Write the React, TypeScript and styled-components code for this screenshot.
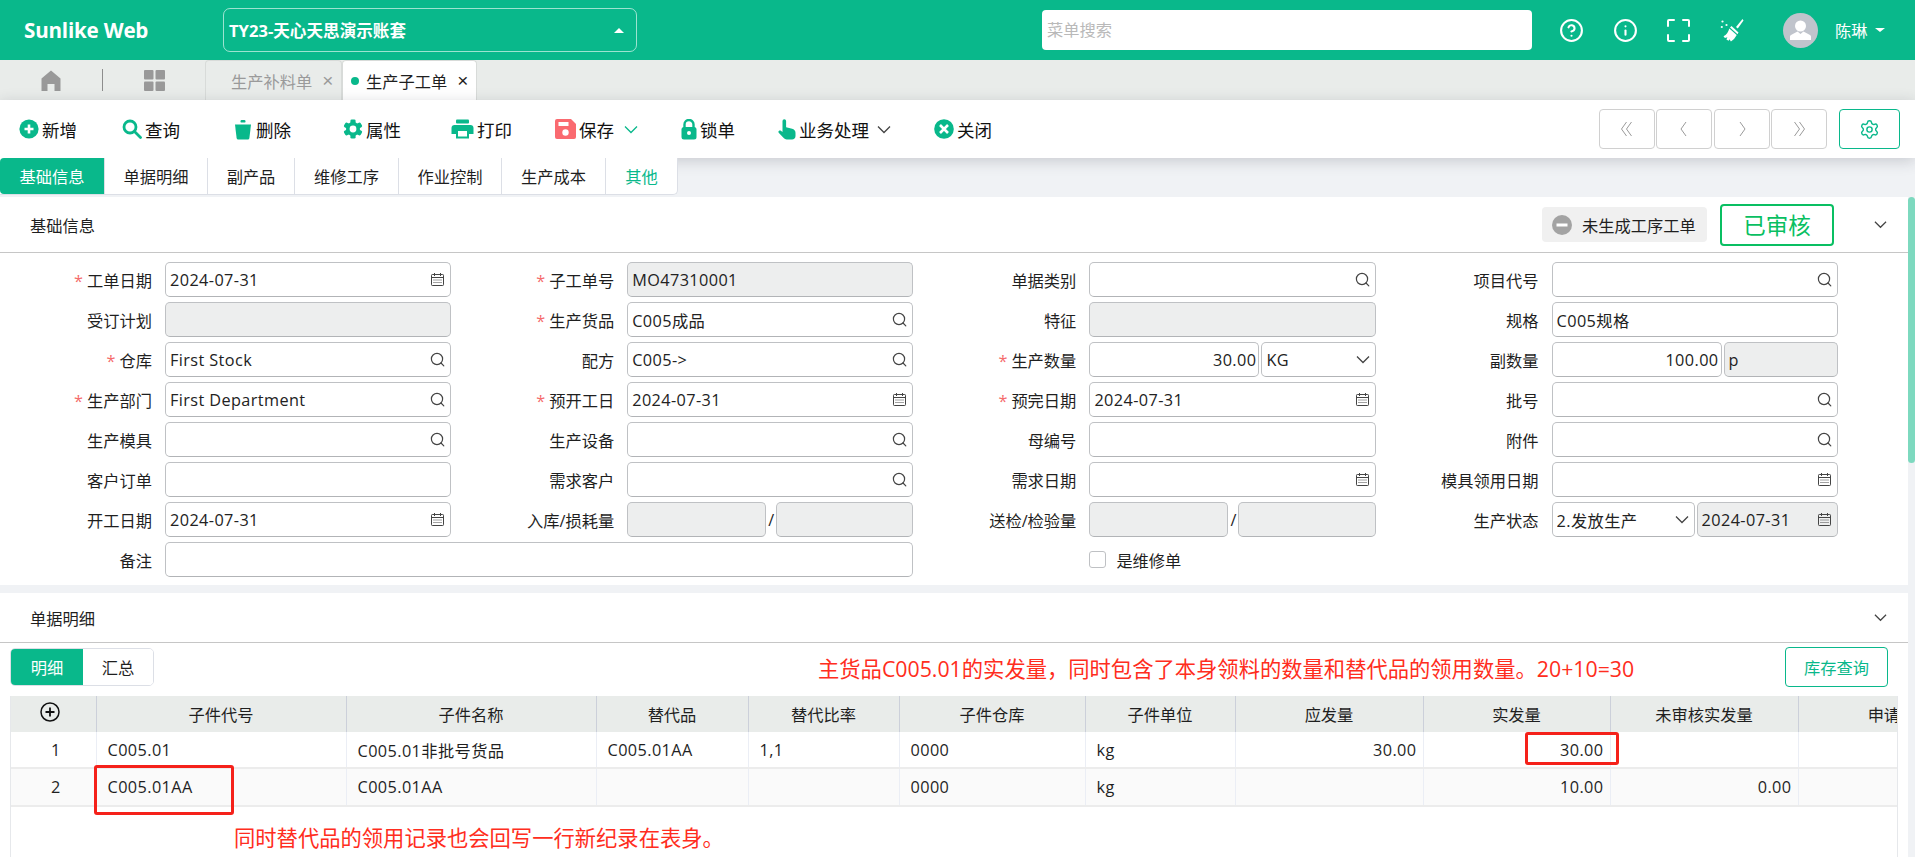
import { FC, Fragment, ReactNode } from 'react';
import styled, { createGlobalStyle } from 'styled-components';
import { Settings, CircleHelp, Info } from 'lucide-react';

const teal = '#09b88b';
const fontStack = `'Open Sans', 'Noto Sans CJK SC', sans-serif`;

const GlobalStyle = createGlobalStyle`
  html, body {
    margin: 0;
    padding: 0;
    background: #f0f2f5;
  }
  body {
    font-family: ${fontStack};
    font-size: 16.25px;
    color: #1f1f1f;
  }
  * {
    box-sizing: border-box;
  }
`;

const Page = styled.div`
  display: flex;
  flex-direction: column;
  width: 1915px;
  height: 857px;
  overflow: hidden;
`;

/* top bar */
const Header = styled.header`
  display: flex;
  align-items: center;
  flex-shrink: 0;
  height: 60px;
  background: ${teal};
  color: #fff;
`;

const Logo = styled.div`
  width: 223px;
  padding-left: 24px;
  font-size: 20.6px;
  font-weight: 700;
  letter-spacing: -0.2px;
  white-space: nowrap;
`;

const AccountSelect = styled.div`
  display: flex;
  align-items: center;
  justify-content: space-between;
  width: 414px;
  height: 44px;
  padding: 0 12px 0 5px;
  border: 1px solid rgba(255, 255, 255, 0.6);
  border-radius: 7px;
  font-size: 16.6px;
  font-weight: 700;
`;

const Caret = styled.i<{ $size?: number }>`
  display: inline-block;
  width: 0;
  height: 0;
  border-left: ${({ $size }) => $size ?? 5}px solid transparent;
  border-right: ${({ $size }) => $size ?? 5}px solid transparent;
  border-bottom: ${({ $size }) => $size ?? 5}px solid #fff;
`;

const CaretDown = styled(Caret)`
  border-bottom: none;
  border-top: ${({ $size }) => $size ?? 4}px solid #fff;
  margin-left: 7px;
`;

const MenuSearch = styled.input`
  width: 490px;
  height: 40px;
  margin-left: 405px;
  padding: 0 5px;
  border: none;
  border-radius: 4px;
  outline: none;
  background: #fff;
  font-family: inherit;
  font-size: 16.25px;

  &::placeholder {
    color: #b9b9b9;
  }
`;

const HeaderIcons = styled.div`
  display: flex;
  margin-left: 13px;
`;

const HeaderIcon = styled.span`
  display: flex;
  align-items: center;
  justify-content: center;
  width: 53.5px;
`;

const Avatar = styled.span`
  display: flex;
  width: 35px;
  height: 35px;
  margin-left: 24px;
  border-radius: 50%;
  overflow: hidden;
  background: #c0c4cc;
`;

const UserName = styled.span`
  display: flex;
  align-items: center;
  margin-left: 17px;
  color: #fff;
`;

/* page tabs */
const PageTabs = styled.nav`
  display: flex;
  align-items: stretch;
  flex-shrink: 0;
  height: 40px;
  background: #e9ecea;
`;

const TabIcon = styled.span<{ $width: number; $divider?: boolean }>`
  display: flex;
  align-items: center;
  justify-content: center;
  width: ${({ $width }) => $width}px;
  border-image: ${({ $divider }) => ($divider ? 'linear-gradient(transparent 25%, #8d8d8d 25%, #8d8d8d 75%, transparent 75%) 1' : 'none')};
  border-right: ${({ $divider }) => ($divider ? '1px solid' : 'none')};
`;

const PageTab = styled.div<{ $active?: boolean }>`
  display: flex;
  align-items: center;
  width: ${({ $active }) => ($active ? 135 : 137)}px;
  padding-left: ${({ $active }) => ($active ? 8 : 25)}px;
  border: 1px solid #d8dbd9;
  border-bottom: none;
  border-radius: 4px 4px 0 0;
  background: ${({ $active }) => ($active ? '#fff' : 'transparent')};
  color: ${({ $active }) => ($active ? '#1f1f1f' : '#9a9a9a')};
  white-space: nowrap;
`;

const TabDot = styled.i`
  width: 8px;
  height: 8px;
  margin-right: 7px;
  border-radius: 50%;
  background: ${teal};
`;

const TabClose = styled.span`
  margin-left: 10px;
  font-size: 19px;
  font-weight: 300;
  font-family: 'Liberation Sans', sans-serif;
`;

/* action toolbar */
const Toolbar = styled.div`
  position: relative;
  z-index: 1;
  display: flex;
  align-items: center;
  flex-shrink: 0;
  height: 58px;
  padding: 0 15px 0 19px;
  background: #fff;
  box-shadow: 0 3px 14px rgba(40, 44, 60, 0.2);
`;

const ActionItem = styled.button<{ $width?: number }>`
  display: flex;
  align-items: center;
  flex-shrink: 0;
  width: ${({ $width }) => ($width ? `${$width}px` : 'auto')};
  height: 40px;
  padding: 0;
  border: none;
  background: none;
  font-family: inherit;
  font-size: 17.5px;
  color: #111;
  white-space: nowrap;

  svg:first-child {
    margin-right: 3px;
  }
`;

const ActionChevron = styled.span<{ $gap: number }>`
  display: flex;
  margin-left: ${({ $gap }) => $gap}px;
`;

const Pager = styled.div`
  display: flex;
  gap: 1.5px;
  margin-left: auto;
`;

const PagerButton = styled.span`
  display: flex;
  align-items: center;
  justify-content: center;
  width: 56px;
  height: 40px;
  border: 1px solid #d0d0d0;
  border-radius: 4px;
`;

const GearButton = styled.span`
  display: flex;
  align-items: center;
  justify-content: center;
  width: 61px;
  height: 40px;
  margin-left: 12px;
  border: 1px solid ${teal};
  border-radius: 4px;
  color: ${teal};
`;

/* body */
const Body = styled.div`
  display: flex;
  flex: 1;
  min-height: 0;
`;

const Main = styled.main`
  display: flex;
  flex-direction: column;
  flex: 1;
  min-width: 0;
`;

const ScrollTrack = styled.div`
  flex-shrink: 0;
  width: 7px;
  padding-top: 39px;
`;

const ScrollThumb = styled.div`
  height: 266px;
  border-radius: 4px;
  background: #7dd9bf;
`;

const SectionTabs = styled.div`
  position: relative;
  z-index: 2;
  display: flex;
  flex-shrink: 0;
  align-self: flex-start;
  height: 37px;
  margin-bottom: 2px;
  background: #fff;
  border: 1px solid #dcdfe6;
  border-left: none;
  border-top: none;
  border-radius: 0 0 5px 0;
`;

const SectionTab = styled.div<{ $width: number; $active?: boolean; $accent?: boolean }>`
  display: flex;
  align-items: center;
  justify-content: center;
  width: ${({ $width }) => $width}px;
  border-right: 1px solid #dcdfe6;
  background: ${({ $active }) => ($active ? teal : 'transparent')};
  color: ${({ $active, $accent }) => ($active ? '#fff' : $accent ? teal : '#1f1f1f')};
  border-radius: ${({ $active }) => ($active ? '4px 0 0 4px' : '0')};

  &:last-child {
    border-right: none;
  }
`;

const Card = styled.section<{ $grow?: boolean }>`
  display: flex;
  flex-direction: column;
  flex: ${({ $grow }) => ($grow ? '1' : '0 0 auto')};
  min-height: 0;
  margin-bottom: ${({ $grow }) => ($grow ? '0' : '8px')};
  background: #fff;
`;

const CardHeader = styled.div<{ $height: number }>`
  display: flex;
  align-items: center;
  flex-shrink: 0;
  height: ${({ $height }) => $height}px;
  padding: 0 21px 0 30px;
  border-bottom: 1px solid #c6c6c6;
`;

const CardTitle = styled.div`
  margin-right: auto;
`;

const GenerateStatus = styled.div`
  display: flex;
  align-items: center;
  width: 165px;
  height: 35px;
  padding-left: 10px;
  border-radius: 4px;
  background: #f0f0f0;
  white-space: nowrap;

  svg {
    margin-right: 10px;
  }
`;

const AuditStamp = styled.div`
  display: flex;
  align-items: center;
  justify-content: center;
  width: 114px;
  height: 42px;
  margin-left: 13px;
  margin-right: 40px;
  border: 2px solid #09bf62;
  border-radius: 4px;
  color: #09bf62;
  font-size: 22.5px;
`;

/* form */
const FormGrid = styled.div`
  display: grid;
  grid-template-columns: repeat(4, 462.2px);
  grid-auto-rows: 35px;
  row-gap: 5px;
  padding: 9px 0 8px;
`;

const Field = styled.div<{ $span?: number }>`
  display: grid;
  grid-template-columns: 152px 1fr;
  column-gap: 13px;
  align-items: center;
  padding-right: 11px;
  min-width: 0;
  ${({ $span }) => $span && `grid-column: span ${$span};`}
`;

const Label = styled.label`
  text-align: right;
  white-space: nowrap;
`;

const Star = styled.span`
  margin-right: 4px;
  color: #f56c6c;
`;

const Controls = styled.div`
  display: flex;
  align-items: center;
  gap: 2px;
  min-width: 0;
  width: 100%;
`;

const Control = styled.div<{ $disabled?: boolean; $basis?: number }>`
  display: flex;
  align-items: center;
  flex: ${({ $basis }) => ($basis ? `0 0 ${$basis}px` : '1 1 0')};
  min-width: 0;
  height: 35px;
  padding-right: 5px;
  border: 1px solid #bfc1c4;
  border-bottom-color: #b2b4b7;
  border-radius: 5px;
  background: ${({ $disabled }) => ($disabled ? '#edeeee' : '#fff')};
`;

const ControlInput = styled.input<{ $right?: boolean }>`
  flex: 1;
  min-width: 0;
  width: 100%;
  height: 100%;
  padding: 0 ${({ $right }) => ($right ? '0' : '0')} 0 4px;
  margin-right: ${({ $right }) => ($right ? '-3px' : '0')};
  border: none;
  outline: none;
  background: transparent;
  font-family: inherit;
  font-size: 16.25px;
  color: #222;
  letter-spacing: 0.4px;
  text-align: ${({ $right }) => ($right ? 'right' : 'left')};
`;

const Slash = styled.span`
  flex-shrink: 0;
  width: 6px;
  text-align: center;
`;

const CheckField = styled.label`
  display: flex;
  align-items: center;
  padding-left: 165px;
`;

const CheckBox = styled.input`
  appearance: none;
  width: 17px;
  height: 17px;
  margin: 0 10px 0 0;
  border: 1px solid #bfc1c4;
  border-radius: 3px;
  background: #fff;
`;

/* detail section */
const DetailBar = styled.div`
  display: flex;
  align-items: center;
  flex-shrink: 0;
  height: 40px;
  margin: 4px 0 9px;
  padding: 0 20px 0 10px;
`;

const Switcher = styled.div`
  display: flex;
  height: 38px;
  border: 1px solid #dcdfe6;
  border-radius: 5px;
  overflow: hidden;
`;

const SwitchItem = styled.div<{ $active?: boolean; $width: number }>`
  display: flex;
  align-items: center;
  justify-content: center;
  width: ${({ $width }) => $width}px;
  background: ${({ $active }) => ($active ? teal : '#fff')};
  color: ${({ $active }) => ($active ? '#fff' : '#1f1f1f')};
`;

const RedNote = styled.div<{ $indent: number }>`
  margin-left: ${({ $indent }) => $indent}px;
  color: #ff2d20;
  font-size: 21.3px;
  white-space: nowrap;
`;

const StockButton = styled.div`
  display: flex;
  align-items: center;
  justify-content: center;
  width: 103px;
  height: 40px;
  margin-left: auto;
  border: 1px solid ${teal};
  border-radius: 4px;
  color: ${teal};
`;

const TableWrap = styled.div`
  position: relative;
  flex: 1;
  width: 1888px;
  min-height: 0;
  margin-left: 10px;
  border-left: 1px solid #e6e8eb;
  border-right: 1px solid #e6e8eb;
  overflow: hidden;
`;

const Table = styled.table`
  width: 1975px;
  border-collapse: collapse;
  table-layout: fixed;
`;

const Th = styled.th`
  height: 36px;
  padding: 0;
  border-right: 1px solid #ccd0da;
  background: #e9ecea;
  font-weight: 400;
  text-align: center;
  white-space: nowrap;
`;

const AddTh = styled(Th)`
  padding: 0 6px 5px 0;

  svg {
    display: block;
    margin: 0 auto;
  }
`;

const Tr = styled.tr<{ $alt?: boolean }>`
  height: ${({ $alt }) => ($alt ? 38 : 36)}px;
  background: ${({ $alt }) => ($alt ? '#fafafa' : '#fff')};
  border-bottom: 2px solid #ececec;
`;

const Td = styled.td<{ $align?: string }>`
  padding: 0 6px 0 11px;
  border-right: 1px solid #ebeef5;
  text-align: ${({ $align }) => $align ?? 'left'};
  letter-spacing: 0.4px;
  white-space: nowrap;
`;

const RedBox = styled.div<{ $left: number; $top: number; $width: number; $height: number }>`
  position: absolute;
  left: ${({ $left }) => $left}px;
  top: ${({ $top }) => $top}px;
  width: ${({ $width }) => $width}px;
  height: ${({ $height }) => $height}px;
  border: 3px solid #f5211a;
  border-radius: 3px;
`;

const FooterNote = styled(RedNote)`
  margin-top: 14px;
`;

/* drawings */
const SearchGlyph = () => (
  <svg width="15" height="15" viewBox="0 0 15 15" fill="none" stroke="#444" strokeWidth="1.2">
    <circle cx="7" cy="7" r="5.6" />
    <path d="M11 11l2.8 2.8" strokeLinecap="round" />
  </svg>
);

const CalendarGlyph = () => (
  <svg width="15" height="15" viewBox="0 0 15 15" fill="none" stroke="#444" strokeWidth="1">
    <rect x="1.5" y="2.5" width="12" height="11" rx="0.8" />
    <path d="M1.5 5.5h12M4.5 1v3M10.5 1v3" />
    <path d="M3.5 8h2M6.5 8h2M9.5 8h2M3.5 10.5h2M6.5 10.5h2M9.5 10.5h2" strokeDasharray="1 .5" />
  </svg>
);

const ChevronGlyph: FC<{ color?: string; width?: number }> = ({ color = '#444', width = 14 }) => (
  <svg width={width} height="9" viewBox="0 0 14 9" fill="none" stroke={color} strokeWidth="1.3">
    <path d="M1 1.5l6 6 6-6" />
  </svg>
);

const PlusCircleIcon = () => (
  <svg width="20" height="20" viewBox="0 0 20 20">
    <circle cx="10" cy="10" r="9.6" fill={teal} />
    <path d="M10 5.5v9M5.5 10h9" stroke="#fff" strokeWidth="2.6" />
  </svg>
);

const SearchIcon = () => (
  <svg width="20" height="20" viewBox="0 0 20 20" fill="none" stroke={teal} strokeWidth="2.8">
    <circle cx="8" cy="8" r="6" />
    <path d="M12.5 12.5l6 6" strokeLinecap="round" />
  </svg>
);

const TrashIcon = () => (
  <svg width="19" height="21" viewBox="0 0 19 21" fill={teal}>
    <path d="M1 5.5h16l-1.6 13.4c-.1.8-.7 1.6-1.7 1.6H4.3c-1 0-1.6-.8-1.7-1.6z" />
    <rect x="6.5" y="1" width="5" height="2.6" rx="1.2" />
  </svg>
);

const GearIcon = () => (
  <svg width="20" height="20" viewBox="0 0 20 20">
    {[0, 60, 120, 180, 240, 300].map((a) => (
      <rect key={a} x="7.4" y="0.4" width="5.2" height="5" rx="1.4" fill={teal} transform={`rotate(${a} 10 10)`} />
    ))}
    <circle cx="10" cy="10" r="7" fill={teal} />
    <circle cx="10" cy="10" r="3.4" fill="#fff" />
  </svg>
);

const PrinterIcon = () => (
  <svg width="23" height="20" viewBox="0 0 23 20">
    <rect x="5" y="0.5" width="13" height="4" rx="1" fill={teal} />
    <path d="M0.5 9c0-1.8 1.2-3 3-3h16c1.8 0 3 1.2 3 3v6h-4.5v4.5H5V15H.5z" fill={teal} />
    <rect x="7" y="12" width="9" height="5.5" fill="#fff" />
  </svg>
);

const SaveIcon = () => (
  <svg width="21" height="20" viewBox="0 0 21 20">
    <path d="M2 0h14l5 5v13a2 2 0 0 1-2 2H2a2 2 0 0 1-2-2V2a2 2 0 0 1 2-2z" fill="#fa6a70" />
    <rect x="3.5" y="3" width="10" height="4" fill="#fff" />
    <circle cx="10.5" cy="13.5" r="3.2" fill="#fff" />
  </svg>
);

const LockIcon = () => (
  <svg width="16" height="21" viewBox="0 0 16 21">
    <path d="M3.5 9V5.5a4.5 4.5 0 0 1 9 0V9" fill="none" stroke={teal} strokeWidth="2.4" />
    <rect x="0.5" y="8" width="15" height="12.5" rx="2.5" fill={teal} />
    <circle cx="8" cy="14" r="2" fill="#fff" />
  </svg>
);

const HandIcon = () => (
  <svg width="18" height="21" viewBox="0 0 18 21" fill={teal}>
    <path d="M4.5 2a1.8 1.8 0 0 1 3.6 0v6.3l6 1.5c2 .5 3.4 2 3.4 4v3.2c0 2-1.5 3.5-3.5 3.5H8.7c-1.2 0-2.2-.5-3-1.4L.7 13.7c-1-1.5.8-3 2.2-2l1.6 1.3z" />
  </svg>
);

const CloseCircleIcon = () => (
  <svg width="20" height="20" viewBox="0 0 20 20">
    <circle cx="10" cy="10" r="9.8" fill={teal} />
    <path d="M6 6l8 8M14 6l-8 8" stroke="#fff" strokeWidth="2.6" />
  </svg>
);

const FullscreenIcon = () => (
  <svg width="23" height="23" viewBox="0 0 23 23" fill="none" stroke="#fff" strokeWidth="2" strokeLinecap="round">
    <path d="M1 7V2a1 1 0 0 1 1-1h5M16 1h5a1 1 0 0 1 1 1v5M22 16v5a1 1 0 0 1-1 1h-5M7 22H2a1 1 0 0 1-1-1v-5" />
  </svg>
);

const BroomIcon = () => (
  <svg width="24" height="24" viewBox="0 0 24 24" fill="#fff">
    <path d="M22.5 1L16 9l1.8 1.6L23.5 2.4z" />
    <path d="M11.5 8l7 6.5-1 1.8L10 9.5z" />
    <path d="M9.3 10.5l7.4 6.6c-1.6 3-3.6 5.3-5.8 6.4l-1.4-2.2-.9 1.5-2.2-1.3 1-2.3-2.5.8-1.4-1.7c3-1.2 4.8-4.1 5.8-7.8z" />
    <circle cx="2.5" cy="3.5" r="1.1" />
    <circle cx="6.5" cy="7" r="1.1" />
    <circle cx="1.8" cy="9" r="1.1" />
  </svg>
);

const AvatarIcon = () => (
  <svg width="35" height="35" viewBox="0 0 35 35" fill="#fff">
    <circle cx="17.5" cy="13" r="5.5" />
    <path d="M14.5 18.5l3 2.5 3-2.5 6.5 3.5c.5.3 1 1 1 1.8V27H7v-3.2c0-.8.5-1.5 1-1.800z" />
  </svg>
);

const HomeIcon = () => (
  <svg width="20" height="21" viewBox="0 0 20 21" fill="#999">
    <path d="M10 0.5l9.5 8V21h-6v-7h-7v7h-6V8.5z" />
  </svg>
);

const GridIcon = () => (
  <svg width="21" height="21" viewBox="0 0 21 21" fill="#999">
    <rect x="0" y="0" width="9.5" height="9.5" rx="1" />
    <rect x="11.5" y="0" width="9.5" height="9.5" rx="1" />
    <rect x="0" y="11.5" width="9.5" height="9.5" rx="1" />
    <rect x="11.5" y="11.5" width="9.5" height="9.5" rx="1" />
  </svg>
);

const PagerGlyph: FC<{ d: string }> = ({ d }) => (
  <svg width="16" height="18" viewBox="0 0 16 18" fill="none" stroke="#9a9a9a" strokeWidth="1">
    <path d={d} />
  </svg>
);

const MinusDisc = () => (
  <svg width="20" height="20" viewBox="0 0 20 20">
    <circle cx="10" cy="10" r="10" fill="#a3a3a3" />
    <rect x="4.5" y="8.5" width="11" height="3" fill="#fff" />
  </svg>
);

const AddRowIcon = () => (
  <svg width="20" height="20" viewBox="0 0 20 20" fill="none" stroke="#111" strokeWidth="1.5">
    <circle cx="10" cy="10" r="9" />
    <path d="M10 5.5v9M5.5 10h9" strokeWidth="1.8" />
  </svg>
);

/* data */
type Glyph = 'search' | 'calendar' | 'chevron';

interface Part {
  value?: string;
  glyph?: Glyph;
  disabled?: boolean;
  right?: boolean;
  basis?: number;
}

interface FieldDef {
  label: string;
  required?: boolean;
  parts: Part[];
  slash?: boolean;
  span?: number;
}

const date = '2024-07-31';
const qty = (value: string): Part => ({ value, right: true, basis: 170 });

const fields: FieldDef[] = [
  { label: '工单日期', required: true, parts: [{ value: date, glyph: 'calendar' }] },
  { label: '子工单号', required: true, parts: [{ value: 'MO47310001', disabled: true }] },
  { label: '单据类别', parts: [{ glyph: 'search' }] },
  { label: '项目代号', parts: [{ glyph: 'search' }] },

  { label: '受订计划', parts: [{ disabled: true }] },
  { label: '生产货品', required: true, parts: [{ value: 'C005成品', glyph: 'search' }] },
  { label: '特征', parts: [{ disabled: true }] },
  { label: '规格', parts: [{ value: 'C005规格' }] },

  { label: '仓库', required: true, parts: [{ value: 'First Stock', glyph: 'search' }] },
  { label: '配方', parts: [{ value: 'C005->', glyph: 'search' }] },
  { label: '生产数量', required: true, parts: [qty('30.00'), { value: 'KG', glyph: 'chevron' }] },
  { label: '副数量', parts: [qty('100.00'), { value: 'p', disabled: true }] },

  { label: '生产部门', required: true, parts: [{ value: 'First Department', glyph: 'search' }] },
  { label: '预开工日', required: true, parts: [{ value: date, glyph: 'calendar' }] },
  { label: '预完日期', required: true, parts: [{ value: date, glyph: 'calendar' }] },
  { label: '批号', parts: [{ glyph: 'search' }] },

  { label: '生产模具', parts: [{ glyph: 'search' }] },
  { label: '生产设备', parts: [{ glyph: 'search' }] },
  { label: '母编号', parts: [{}] },
  { label: '附件', parts: [{ glyph: 'search' }] },

  { label: '客户订单', parts: [{}] },
  { label: '需求客户', parts: [{ glyph: 'search' }] },
  { label: '需求日期', parts: [{ glyph: 'calendar' }] },
  { label: '模具领用日期', parts: [{ glyph: 'calendar' }] },

  { label: '开工日期', parts: [{ value: date, glyph: 'calendar' }] },
  { label: '入库/损耗量', slash: true, parts: [{ disabled: true, basis: 139 }, { disabled: true }] },
  { label: '送检/检验量', slash: true, parts: [{ disabled: true, basis: 139 }, { disabled: true }] },
  {
    label: '生产状态',
    parts: [
      { value: '2.发放生产', glyph: 'chevron', basis: 143 },
      { value: date, glyph: 'calendar', disabled: true },
    ],
  },

  { label: '备注', span: 2, parts: [{}] },
];

const actions: { text: string; icon: ReactNode; width?: number; chevron?: string; chevronGap?: number }[] = [
  { text: '新增', icon: <PlusCircleIcon />, width: 103 },
  { text: '查询', icon: <SearchIcon />, width: 112 },
  { text: '删除', icon: <TrashIcon />, width: 109 },
  { text: '属性', icon: <GearIcon />, width: 108 },
  { text: '打印', icon: <PrinterIcon />, width: 104 },
  { text: '保存', icon: <SaveIcon />, width: 126, chevron: teal, chevronGap: 10 },
  { text: '锁单', icon: <LockIcon />, width: 97 },
  { text: '业务处理', icon: <HandIcon />, width: 156, chevron: '#444', chevronGap: 8 },
  { text: '关闭', icon: <CloseCircleIcon /> },
];

const sectionTabs = [
  { text: '基础信息', width: 105, active: true },
  { text: '单据明细', width: 103 },
  { text: '副产品', width: 87 },
  { text: '维修工序', width: 104 },
  { text: '作业控制', width: 103 },
  { text: '生产成本', width: 104 },
  { text: '其他', width: 71, accent: true },
];

const columns = [85, 250, 250, 152, 151, 186, 150, 188, 187, 188, 188];
const heads = ['子件代号', '子件名称', '替代品', '替代比率', '子件仓库', '子件单位', '应发量', '实发量', '未审核实发量', '申请量'];

const glyphFor = (glyph?: Glyph) => {
  if (glyph === 'search') return <SearchGlyph />;
  if (glyph === 'calendar') return <CalendarGlyph />;
  if (glyph === 'chevron') return <ChevronGlyph />;
  return null;
};

const FormField: FC<{ field: FieldDef }> = ({ field }) => (
  <Field $span={field.span}>
    <Label>
      {field.required && <Star>*</Star>}
      {field.label}
    </Label>
    <Controls>
      {field.parts.map((part, i) => (
        <Fragment key={i}>
          {field.slash && i === 1 && <Slash>/</Slash>}
          <Control $disabled={part.disabled} $basis={part.basis}>
            <ControlInput readOnly value={part.value ?? ''} $right={part.right} aria-label={field.label} />
            {glyphFor(part.glyph)}
          </Control>
        </Fragment>
      ))}
    </Controls>
  </Field>
);

const CollapseChevron = () => <ChevronGlyph width={13} />;

export default function App() {
  return (
    <Page>
      <GlobalStyle />
      <Header>
        <Logo>Sunlike Web</Logo>
        <AccountSelect>
          <span>TY23-天心天思演示账套</span>
          <Caret />
        </AccountSelect>
        <MenuSearch placeholder="菜单搜索" />
        <HeaderIcons>
          <HeaderIcon>
            <CircleHelp size={25} strokeWidth={2} />
          </HeaderIcon>
          <HeaderIcon>
            <Info size={25} strokeWidth={2} />
          </HeaderIcon>
          <HeaderIcon>
            <FullscreenIcon />
          </HeaderIcon>
          <HeaderIcon>
            <BroomIcon />
          </HeaderIcon>
        </HeaderIcons>
        <Avatar>
          <AvatarIcon />
        </Avatar>
        <UserName>
          陈琳
          <CaretDown />
        </UserName>
      </Header>

      <PageTabs>
        <TabIcon $width={103} $divider>
          <HomeIcon />
        </TabIcon>
        <TabIcon $width={102}>
          <GridIcon />
        </TabIcon>
        <PageTab>
          生产补料单
          <TabClose>×</TabClose>
        </PageTab>
        <PageTab $active>
          <TabDot />
          生产子工单
          <TabClose>×</TabClose>
        </PageTab>
      </PageTabs>

      <Toolbar>
        {actions.map((action) => (
          <ActionItem key={action.text} $width={action.width}>
            {action.icon}
            {action.text}
            {action.chevron && (
              <ActionChevron $gap={action.chevronGap ?? 8}>
                <ChevronGlyph color={action.chevron} />
              </ActionChevron>
            )}
          </ActionItem>
        ))}
        <Pager>
          <PagerButton>
            <PagerGlyph d="M7.5 2L2.5 9l5 7M12.5 2l-5 7 5 7" />
          </PagerButton>
          <PagerButton>
            <PagerGlyph d="M10 2L5 9l5 7" />
          </PagerButton>
          <PagerButton>
            <PagerGlyph d="M6 2l5 7-5 7" />
          </PagerButton>
          <PagerButton>
            <PagerGlyph d="M3.5 2l5 7-5 7M8.5 2l5 7-5 7" />
          </PagerButton>
        </Pager>
        <GearButton>
          <Settings size={21} strokeWidth={1.6} />
        </GearButton>
      </Toolbar>

      <Body>
        <Main>
          <SectionTabs>
            {sectionTabs.map((tab) => (
              <SectionTab key={tab.text} $width={tab.width} $active={tab.active} $accent={tab.accent}>
                {tab.text}
              </SectionTab>
            ))}
          </SectionTabs>

          <Card>
            <CardHeader $height={56}>
              <CardTitle>基础信息</CardTitle>
              <GenerateStatus>
                <MinusDisc />
                未生成工序工单
              </GenerateStatus>
              <AuditStamp>已审核</AuditStamp>
              <CollapseChevron />
            </CardHeader>
            <FormGrid>
              {fields.map((field) => (
                <FormField key={field.label} field={field} />
              ))}
              <CheckField>
                <CheckBox type="checkbox" />
                是维修单
              </CheckField>
            </FormGrid>
          </Card>

          <Card $grow>
            <CardHeader $height={50}>
              <CardTitle>单据明细</CardTitle>
              <CollapseChevron />
            </CardHeader>
            <DetailBar>
              <Switcher>
                <SwitchItem $active $width={72}>
                  明细
                </SwitchItem>
                <SwitchItem $width={70}>汇总</SwitchItem>
              </Switcher>
              <RedNote $indent={664}>主货品C005.01的实发量，同时包含了本身领料的数量和替代品的领用数量。20+10=30</RedNote>
              <StockButton>库存查询</StockButton>
            </DetailBar>
            <TableWrap>
              <Table>
                <colgroup>
                  {columns.map((w, i) => (
                    <col key={i} width={w} />
                  ))}
                </colgroup>
                <thead>
                  <tr>
                    <AddTh>
                      <AddRowIcon />
                    </AddTh>
                    {heads.map((head) => (
                      <Th key={head}>{head}</Th>
                    ))}
                  </tr>
                </thead>
                <tbody>
                  <Tr>
                    <Td $align="center">1</Td>
                    <Td>C005.01</Td>
                    <Td>C005.01非批号货品</Td>
                    <Td>C005.01AA</Td>
                    <Td>1,1</Td>
                    <Td>0000</Td>
                    <Td>kg</Td>
                    <Td $align="right">30.00</Td>
                    <Td $align="right">30.00</Td>
                    <Td />
                    <Td />
                  </Tr>
                  <Tr $alt>
                    <Td $align="center">2</Td>
                    <Td>C005.01AA</Td>
                    <Td>C005.01AA</Td>
                    <Td />
                    <Td />
                    <Td>0000</Td>
                    <Td>kg</Td>
                    <Td />
                    <Td $align="right">10.00</Td>
                    <Td $align="right">0.00</Td>
                    <Td />
                  </Tr>
                </tbody>
              </Table>
              <FooterNote $indent={223}>同时替代品的领用记录也会回写一行新纪录在表身。</FooterNote>
              <RedBox $left={83} $top={69} $width={140} $height={50} />
              <RedBox $left={1514} $top={36} $width={94} $height={33} />
            </TableWrap>
          </Card>
        </Main>
        <ScrollTrack>
          <ScrollThumb />
        </ScrollTrack>
      </Body>
    </Page>
  );
}
